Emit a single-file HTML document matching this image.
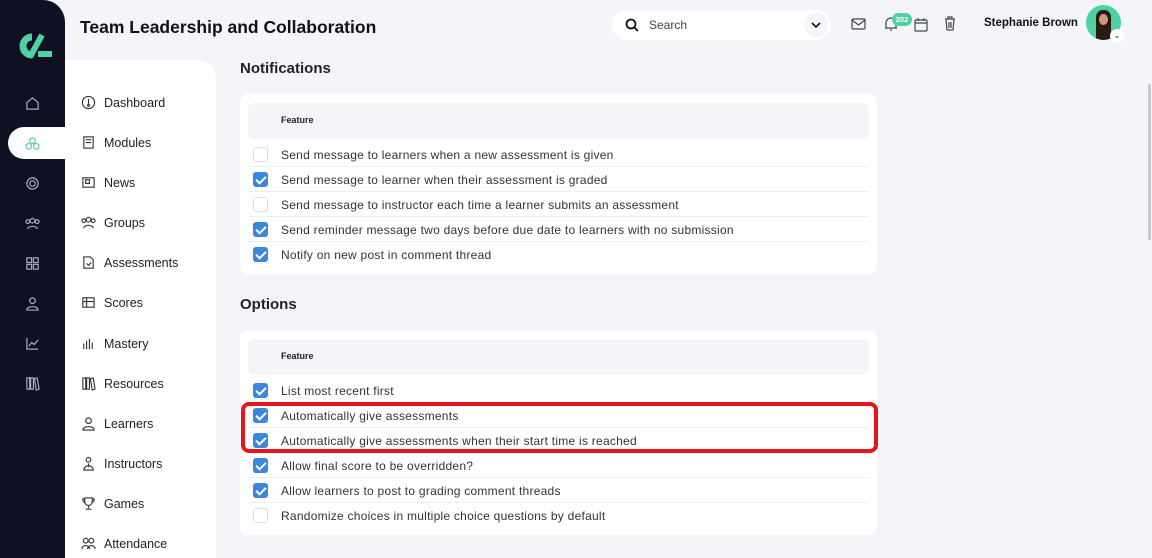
<!DOCTYPE html><html><head><style>
*{box-sizing:border-box;margin:0;padding:0}
body{width:1152px;height:558px;overflow:hidden;background:#f4f5f9;font-family:"Liberation Sans",sans-serif;position:relative;color:#222}
.side{position:absolute;left:0;top:0;width:65px;height:558px;background:#0d1121;border-radius:0 22px 0 0}
.pill{position:absolute;left:8px;top:127px;width:60px;height:32px;background:#fff;border-radius:16px 0 0 16px}
.si{position:absolute;left:25px;width:15px;height:15px}
.nav{position:absolute;left:65px;top:60px;width:151px;height:498px;background:#fff;border-radius:0 18px 0 0}
.ni{position:absolute;left:16px;font-size:12.5px;color:#222;display:flex;align-items:center;gap:8px}
.ni svg{width:15px;height:15px}
h1{position:absolute;left:80px;top:17px;font-size:17.5px;font-weight:bold;color:#111}
h2{position:absolute;left:240px;font-size:15px;font-weight:bold;color:#222}
.card{position:absolute;left:240px;width:637px;background:#fff;border-radius:8px}
.hd{position:absolute;left:8px;top:9px;width:621px;height:36px;background:#f4f5f9;border-radius:6px;font-size:9px;font-weight:bold;padding:12px 0 0 33px}
.row{position:absolute;left:8px;width:621px;height:25px;border-bottom:1px solid #eee;font-size:12px;letter-spacing:0.25px;color:#333;padding-left:33px;line-height:26px}
.cb{position:absolute;left:5px;top:5px;width:15px;height:15px;border:1px solid #ddd;border-radius:3px;background:#fff}
.cb.on{background:#3b86e0;border-color:#3b86e0}
.cb.on:after{content:"";position:absolute;left:4px;top:1px;width:4px;height:8px;border:solid #fff;border-width:0 2px 2px 0;transform:rotate(45deg)}
.search{position:absolute;left:612px;top:10px;width:219px;height:30px;background:#fff;border-radius:15px;font-size:12px;color:#444;padding:8px 0 0 37px}
</style></head><body>
<div class="side">
<svg style="position:absolute;left:12px;top:33px" width="41" height="26" viewBox="0 0 41 26"><path d="M20 4 A9 9 0 1 0 20 22" stroke="#4fd1a1" stroke-width="7" fill="none"/><path d="M30 2 L18 24" stroke="#4fd1a1" stroke-width="6"/><rect x="26" y="18" width="14" height="6" fill="#4fd1a1"/></svg>
<div class="pill"></div>
<svg class="si" style="top:96px" viewBox="0 0 16 16" fill="none" stroke="#aab" stroke-width="1.3"><path d="M2 7L8 2l6 5v7H2z"/></svg>
<svg class="si" style="top:136px" viewBox="0 0 16 16" fill="none" stroke="#4fd1a1" stroke-width="1.2"><circle cx="8" cy="5" r="3"/><circle cx="4" cy="11" r="3"/><circle cx="12" cy="11" r="3"/></svg>
<svg class="si" style="top:176px" viewBox="0 0 16 16" fill="none" stroke="#aab" stroke-width="1.3"><circle cx="8" cy="8" r="6"/><circle cx="8" cy="8" r="3"/></svg>
<svg class="si" style="top:216px" viewBox="0 0 16 16" fill="none" stroke="#aab" stroke-width="1.3"><circle cx="8" cy="5" r="2.5"/><circle cx="3" cy="6" r="2"/><circle cx="13" cy="6" r="2"/><path d="M3 14c0-4 10-4 10 0"/></svg>
<svg class="si" style="top:256px" viewBox="0 0 16 16" fill="none" stroke="#aab" stroke-width="1.3"><rect x="2" y="2" width="5" height="5"/><rect x="9" y="2" width="5" height="5"/><rect x="2" y="9" width="5" height="5"/><rect x="9" y="9" width="5" height="5"/></svg>
<svg class="si" style="top:296px" viewBox="0 0 16 16" fill="none" stroke="#aab" stroke-width="1.3"><circle cx="8" cy="5" r="3"/><path d="M2 15c0-5 12-5 12 0z"/></svg>
<svg class="si" style="top:336px" viewBox="0 0 16 16" fill="none" stroke="#aab" stroke-width="1.3"><path d="M2 2v12h12M4 11l3-4 3 2 4-5"/></svg>
<svg class="si" style="top:376px" viewBox="0 0 16 16" fill="none" stroke="#aab" stroke-width="1.3"><path d="M2 2h3v12H2zM6 2h3v12H6zM10 3l3-1 2 12-3 1z"/></svg>
</div>
<div class="nav">
<div class="ni" style="top:35px"><svg viewBox="0 0 16 16" fill="none" stroke="#333" stroke-width="1.2"><circle cx="8" cy="8" r="6.5"/><path d="M8 4v6"/><circle cx="8" cy="11" r="1"/></svg>Dashboard</div>
<div class="ni" style="top:75px"><svg viewBox="0 0 16 16" fill="none" stroke="#333" stroke-width="1.2"><rect x="3" y="2" width="10" height="12"/><path d="M5 5h6M5 8h6"/></svg>Modules</div>
<div class="ni" style="top:115px"><svg viewBox="0 0 16 16" fill="none" stroke="#333" stroke-width="1.2"><rect x="2" y="3" width="12" height="10"/><rect x="5" y="5" width="4" height="4"/></svg>News</div>
<div class="ni" style="top:155px"><svg viewBox="0 0 16 16" fill="none" stroke="#333" stroke-width="1.2"><circle cx="8" cy="5" r="2.5"/><circle cx="3" cy="6" r="2"/><circle cx="13" cy="6" r="2"/><path d="M3 14c0-4 10-4 10 0"/></svg>Groups</div>
<div class="ni" style="top:195px"><svg viewBox="0 0 16 16" fill="none" stroke="#333" stroke-width="1.2"><path d="M3 2h7l3 3v9H3z"/><path d="M6 9l2 2 3-3"/></svg>Assessments</div>
<div class="ni" style="top:235px"><svg viewBox="0 0 16 16" fill="none" stroke="#333" stroke-width="1.2"><rect x="2" y="3" width="12" height="10"/><path d="M2 7h12M6 3v10"/></svg>Scores</div>
<div class="ni" style="top:276px"><svg viewBox="0 0 16 16" fill="none" stroke="#333" stroke-width="1.2"><path d="M3 14V8M6 14V5M9 14V3M12 14V7"/></svg>Mastery</div>
<div class="ni" style="top:316px"><svg viewBox="0 0 16 16" fill="none" stroke="#333" stroke-width="1.2"><path d="M2 2h3v12H2zM6 2h3v12H6zM10 3l3-1 2 12-3 1z"/></svg>Resources</div>
<div class="ni" style="top:356px"><svg viewBox="0 0 16 16" fill="none" stroke="#333" stroke-width="1.2"><circle cx="8" cy="5" r="3"/><path d="M2 15c0-5 12-5 12 0z"/></svg>Learners</div>
<div class="ni" style="top:396px"><svg viewBox="0 0 16 16" fill="none" stroke="#333" stroke-width="1.2"><circle cx="8" cy="4" r="2.5"/><path d="M3 15c0-6 10-6 10 0zM8 8v4"/></svg>Instructors</div>
<div class="ni" style="top:436px"><svg viewBox="0 0 16 16" fill="none" stroke="#333" stroke-width="1.2"><path d="M4 2h8v4a4 4 0 0 1-8 0zM8 10v3M5 14h6M4 3H2v2l2 2M12 3h2v2l-2 2"/></svg>Games</div>
<div class="ni" style="top:476px"><svg viewBox="0 0 16 16" fill="none" stroke="#333" stroke-width="1.2"><circle cx="5" cy="5" r="2.5"/><circle cx="11" cy="5" r="2.5"/><path d="M1 14c0-5 8-5 8 0M7 14c0-5 8-5 8 0"/></svg>Attendance</div>
</div>
<h1>Team Leadership and Collaboration</h1>
<div class="search">Search
<svg style="position:absolute;left:13px;top:8px" width="14" height="14" viewBox="0 0 14 14" fill="none" stroke="#111" stroke-width="1.8"><circle cx="6" cy="6" r="4.5"/><path d="M9.5 9.5L13 13"/></svg>
<div style="position:absolute;right:3px;top:3px;width:24px;height:24px;border-radius:12px;background:#f4f5f9"><svg style="position:absolute;left:7px;top:9px" width="10" height="7" viewBox="0 0 10 7" fill="none" stroke="#111" stroke-width="1.6"><path d="M1 1l4 4 4-4"/></svg></div></div>
<svg style="position:absolute;left:851px;top:18px" width="15" height="12" viewBox="0 0 15 12" fill="none" stroke="#444" stroke-width="1.2"><rect x="1" y="1" width="13" height="10" rx="1"/><path d="M1 2l6.5 5L14 2"/></svg>
<svg style="position:absolute;left:884px;top:16px" width="14" height="16" viewBox="0 0 14 16" fill="none" stroke="#444" stroke-width="1.2"><path d="M2 12V7a5 5 0 0 1 10 0v5zM1 12h12M6 14h2"/></svg>
<div style="position:absolute;left:892px;top:13px;width:20px;height:13px;border-radius:7px;background:#4fd1a1;color:#fff;font-size:7.5px;font-weight:bold;text-align:center;line-height:13px">202</div>
<svg style="position:absolute;left:914px;top:17px" width="14" height="15" viewBox="0 0 14 15" fill="none" stroke="#444" stroke-width="1.2"><rect x="1" y="3" width="12" height="11" rx="1"/><path d="M1 6h12M4 1v3M10 1v3"/></svg>
<svg style="position:absolute;left:944px;top:16px" width="12" height="15" viewBox="0 0 12 15" fill="none" stroke="#444" stroke-width="1.2"><path d="M1 3h10M4 3V1h4v2M2 3l1 11h6l1-11M5 6v6M7 6v6"/></svg>
<div style="position:absolute;left:984px;top:17px;font-size:11.5px;font-weight:bold;color:#111">Stephanie Brown</div>
<div style="position:absolute;left:1086px;top:5px;width:35px;height:35px;border-radius:50%;background:#4fd1a1;overflow:hidden"><div style="position:absolute;left:10px;top:5px;width:15px;height:30px;border-radius:7px 7px 0 0;background:#2a1a14"></div><div style="position:absolute;left:13px;top:9px;width:9px;height:11px;border-radius:50%;background:#c99b80"></div></div>
<div style="position:absolute;left:1110px;top:29px;width:14px;height:14px;border-radius:50%;background:#fff;font-size:8px;text-align:center;line-height:13px">⌄</div>
<div style="position:absolute;left:1148px;top:84px;width:3px;height:156px;background:#c8c8c8;border-radius:2px"></div>

<h2 style="top:60px">Notifications</h2>
<div class="card" style="top:94px;height:180px">
<div class="hd">Feature</div>
<div class="row" style="top:48px"><div class="cb"></div>Send message to learners when a new assessment is given</div>
<div class="row" style="top:73px"><div class="cb on"></div>Send message to learner when their assessment is graded</div>
<div class="row" style="top:98px"><div class="cb"></div>Send message to instructor each time a learner submits an assessment</div>
<div class="row" style="top:123px"><div class="cb on"></div>Send reminder message two days before due date to learners with no submission</div>
<div class="row" style="top:148px;border:0"><div class="cb on"></div>Notify on new post in comment thread</div>
</div>
<h2 style="top:296px">Options</h2>
<div class="card" style="top:330px;height:205px">
<div class="hd">Feature</div>
<div class="row" style="top:48px"><div class="cb on"></div>List most recent first</div>
<div class="row" style="top:73px"><div class="cb on"></div>Automatically give assessments</div>
<div class="row" style="top:98px"><div class="cb on"></div>Automatically give assessments when their start time is reached</div>
<div class="row" style="top:123px"><div class="cb on"></div>Allow final score to be overridden?</div>
<div class="row" style="top:148px"><div class="cb on"></div>Allow learners to post to grading comment threads</div>
<div class="row" style="top:173px;border:0"><div class="cb"></div>Randomize choices in multiple choice questions by default</div>
</div>
<div style="position:absolute;left:241px;top:402px;width:637px;height:51px;border:4px solid #e8141b;border-radius:8px"></div>
</body></html>
